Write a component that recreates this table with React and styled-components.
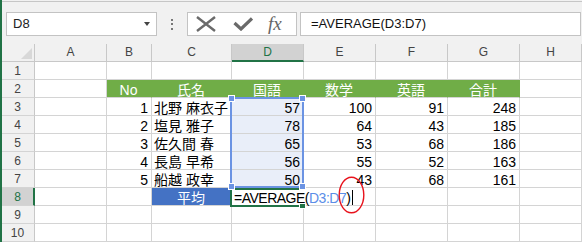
import React from 'react'
import styled, { createGlobalStyle } from 'styled-components'

const GlobalStyle = createGlobalStyle`
  html, body {
    margin: 0;
    padding: 0;
    background: #fff;
    overflow: hidden;
  }
  body {
    font-family: "Liberation Sans", "Noto Sans CJK JP", sans-serif;
  }
`

const GREEN = '#217346'
const GRID = '#d4d4d4'

const columns = ['A', 'B', 'C', 'D', 'E', 'F', 'G', 'H']
const titles = ['No', '氏名', '国語', '数学', '英語', '合計']
const students = [
  [1, '北野 麻衣子', 57, 100, 91, 248],
  [2, '塩見 雅子', 78, 64, 43, 185],
  [3, '佐久間 春', 65, 53, 68, 186],
  [4, '長島 早希', 56, 55, 52, 163],
  [5, '船越 政幸', 50, 43, 68, 161],
]

const App = () => {
  return (
    <>
      <GlobalStyle />
      <Window>
        <TopLine />
        <FormulaBar>
          <NameBox>
            <span>D8</span>
            <DropArrow />
          </NameBox>
          <Dots>
            <Dot />
            <Dot />
            <Dot />
          </Dots>
          <IconBox>
            <svg width="20" height="16" viewBox="0 0 20 16">
              <path d="M1 1 L19 15 M19 1 L1 15" stroke="#6a6a6a" strokeWidth="2.4" fill="none" />
            </svg>
            <svg width="20" height="14" viewBox="0 0 20 14">
              <polyline points="1.5,6 8,12 19,1.5" stroke="#6a6a6a" strokeWidth="3.2" fill="none" />
            </svg>
            <Fx>fx</Fx>
          </IconBox>
          <FormulaInput>=AVERAGE(D3:D7)</FormulaInput>
        </FormulaBar>

        <Sheet>
          <Corner>
            <CornerMark />
          </Corner>
          {columns.map(c => (
            <ColHead key={c} $active={c === 'D'}>{c}</ColHead>
          ))}

          <RowHead>1</RowHead>
          {columns.map(c => <Cell key={'r1' + c} />)}

          <RowHead>2</RowHead>
          <Cell />
          {titles.map(t => (
            <Cell key={t} $bg="#70ad47" $edge="#70ad47" $fg="#fff" $align="center">{t}</Cell>
          ))}
          <Cell />

          {students.map((s, i) => (
            <React.Fragment key={s[0]}>
              <RowHead>{i + 3}</RowHead>
              <Cell />
              <Cell $align="right">{s[0]}</Cell>
              <Cell>{s[1]}</Cell>
              <Cell $align="right" $bg="#e9eef9">{s[2]}</Cell>
              <Cell $align="right">{s[3]}</Cell>
              <Cell $align="right">{s[4]}</Cell>
              <Cell $align="right">{s[5]}</Cell>
              <Cell />
            </React.Fragment>
          ))}

          <RowHead $active>8</RowHead>
          <Cell />
          <Cell />
          <Cell $bg="#4472c4" $edge="#4472c4" $fg="#fff" $align="center">平均</Cell>
          <EditCell>
            <ActiveFrame>
              <FillHandle />
            </ActiveFrame>
            =AVERAGE(<RefText>D3:D7</RefText>)<Caret />
            <Circle width="27" height="38" viewBox="0 0 27 38">
              <ellipse cx="13.5" cy="19" rx="12.3" ry="17.8" stroke="#e8121c" strokeWidth="1.4" fill="none" />
            </Circle>
          </EditCell>
          <Cell />
          <Cell />
          <Cell />

          {[9, 10].map(n => (
            <React.Fragment key={n}>
              <RowHead>{n}</RowHead>
              {columns.map(c => <Cell key={n + c} />)}
            </React.Fragment>
          ))}

          {/* range outline over D3:D7, placed on the grid area but out of flow */}
          <Selection>
            <Handle $top $left />
            <Handle $top />
            <Handle $left />
            <Handle />
          </Selection>
        </Sheet>
      </Window>
    </>
  )
}

const Window = styled.div`
  width: 582px;
  height: 242px;
  box-sizing: border-box;
  border-left: 2px solid ${GREEN};
  background: #f1f1f1;
  overflow: hidden;
  display: flex;
  flex-direction: column;
`

const TopLine = styled.div`
  height: 1px;
  margin-top: 1px;
  background: #c6c6c6;
`

const FormulaBar = styled.div`
  height: 43px;
  box-sizing: border-box;
  display: flex;
  align-items: flex-start;
  padding: 10px 0 0 4px;
`

const NameBox = styled.div`
  box-sizing: border-box;
  width: 151px;
  height: 24px;
  border: 1px solid #c3c3c3;
  background: #fff;
  display: flex;
  align-items: center;
  justify-content: space-between;
  padding: 0 6px 0 6px;
  font-size: 13px;
  color: #222;
`

const DropArrow = styled.span`
  width: 0;
  height: 0;
  border-left: 3.5px solid transparent;
  border-right: 3.5px solid transparent;
  border-top: 4px solid #444;
  margin-top: 1px;
`

const Dots = styled.div`
  display: flex;
  flex-direction: column;
  gap: 2.5px;
  margin: 7px 14px 0 14px;
`

const Dot = styled.span`
  width: 2px;
  height: 2px;
  background: #777;
`

const IconBox = styled.div`
  box-sizing: border-box;
  width: 110px;
  height: 24px;
  border: 1px solid #c3c3c3;
  background: #fff;
  display: flex;
  align-items: center;
  gap: 17px;
  padding-left: 8px;
  svg {
    flex: none;
  }
`

const Fx = styled.span`
  font-family: "Liberation Serif", serif;
  font-style: italic;
  font-size: 19px;
  line-height: 19px;
  color: #666;
  margin-left: -2px;
`

const FormulaInput = styled.div`
  flex: 1;
  box-sizing: border-box;
  height: 24px;
  margin: 0 1px 0 3px;
  border: 1px solid #c3c3c3;
  background: #fff;
  padding-left: 10px;
  font-size: 13px;
  line-height: 22px;
  color: #111;
  white-space: nowrap;
`

const Sheet = styled.div`
  position: relative;
  display: grid;
  grid-template-columns: 33px 72px 45px 80px 72px 72px 72px 72px 1fr;
  grid-template-rows: repeat(11, 18px);
  background: #fff;
`

const Corner = styled.div`
  box-sizing: border-box;
  background: #f1f1f1;
  border-right: 1px solid #c8c8c8;
  border-bottom: 1px solid #c8c8c8;
  display: flex;
  align-items: flex-end;
  justify-content: flex-end;
  padding: 0 2px 2px 0;
`

const CornerMark = styled.span`
  width: 0;
  height: 0;
  border-left: 11px solid transparent;
  border-bottom: 11px solid #d8d8d8;
`

const ColHead = styled.div`
  box-sizing: border-box;
  background: ${p => (p.$active ? '#d2d2d2' : '#f1f1f1')};
  color: ${p => (p.$active ? GREEN : '#444')};
  border-right: 1px solid #c8c8c8;
  border-bottom: ${p => (p.$active ? `2px solid ${GREEN}` : '1px solid #c8c8c8')};
  text-align: center;
  font-size: 12px;
  line-height: ${p => (p.$active ? '16px' : '17px')};
`

const RowHead = styled.div`
  box-sizing: border-box;
  background: ${p => (p.$active ? '#d2d2d2' : '#f1f1f1')};
  color: ${p => (p.$active ? GREEN : '#444')};
  border-right: ${p => (p.$active ? `2px solid ${GREEN}` : '1px solid #c8c8c8')};
  border-bottom: 1px solid ${GRID};
  text-align: center;
  font-size: 12px;
  line-height: 18px;
  padding-right: ${p => (p.$active ? '0' : '1px')};
`

const Cell = styled.div`
  box-sizing: border-box;
  border-right: 1px solid ${p => p.$edge || GRID};
  border-bottom: 1px solid ${GRID};
  background: ${p => p.$bg || '#fff'};
  color: ${p => p.$fg || '#000'};
  text-align: ${p => p.$align || 'left'};
  padding: 2px 3px 0 2px;
  font-size: 14px;
  line-height: 17px;
  white-space: nowrap;
`

const Selection = styled.div`
  position: absolute;
  grid-column: 5 / 6;
  grid-row: 4 / 9;
  top: -1px;
  left: -2px;
  right: 0;
  bottom: 0;
  border: 2px solid #6b93e3;
  pointer-events: none;
`

const Handle = styled.span`
  position: absolute;
  width: 5px;
  height: 5px;
  background: #6b93e3;
  border: 1px solid #fff;
  ${p => (p.$top ? 'top: -4px;' : 'bottom: -4px;')}
  ${p => (p.$left ? 'left: -4px;' : 'right: -4px;')}
`

const EditCell = styled.div`
  grid-column: span 2;
  position: relative;
  box-sizing: border-box;
  background: #fff;
  border-right: 1px solid ${GRID};
  border-bottom: 1px solid ${GRID};
  padding: 2px 0 0 2px;
  font-size: 14px;
  letter-spacing: -0.5px;
  line-height: 17px;
  white-space: nowrap;
  color: #000;
`

const ActiveFrame = styled.span`
  position: absolute;
  left: -2px;
  top: 0;
  width: 73px;
  height: 19px;
  box-sizing: border-box;
  border: 2px solid ${GREEN};
  border-right: none;
`

const FillHandle = styled.span`
  position: absolute;
  right: -3px;
  bottom: -4px;
  width: 5px;
  height: 4px;
  background: ${GREEN};
  border: 1px solid #fff;
`

const RefText = styled.span`
  color: #5b8ee8;
`

const Caret = styled.span`
  display: inline-block;
  width: 1px;
  height: 15px;
  background: #000;
  margin-left: 2px;
  vertical-align: -2px;
`

const Circle = styled.svg`
  position: absolute;
  left: 106px;
  top: -12px;
`

export default App
